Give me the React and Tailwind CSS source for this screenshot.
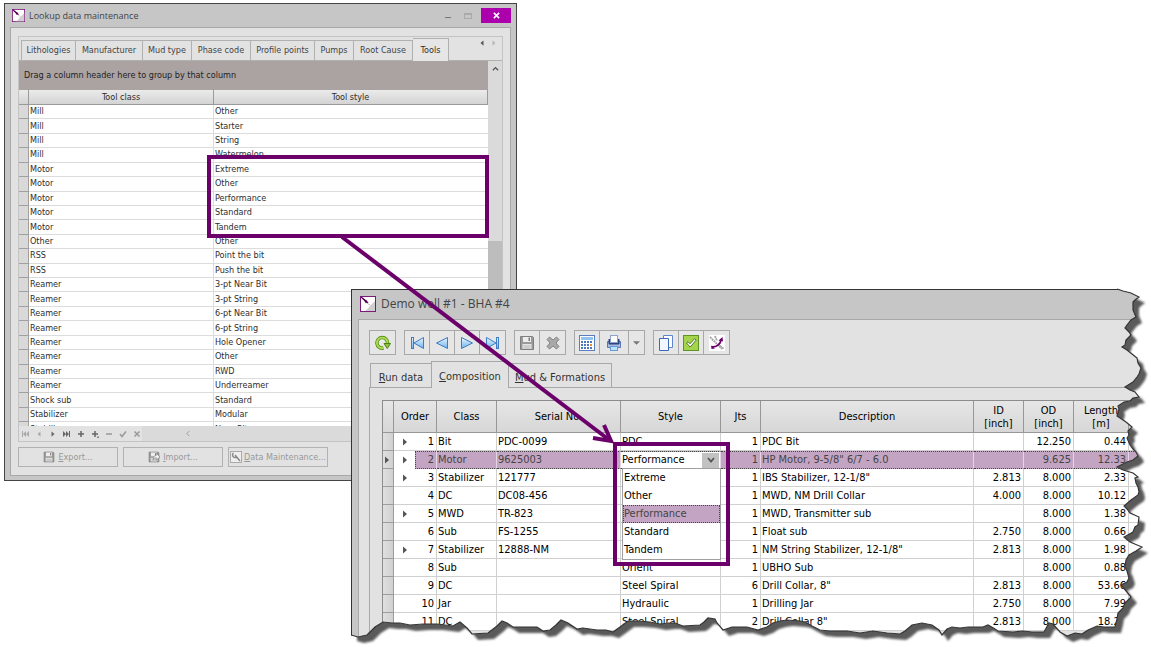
import React from "react";

const LOOKUP_TABS = ["Lithologies", "Manufacturer", "Mud type", "Phase code", "Profile points", "Pumps", "Root Cause", "Tools"];
const LOOKUP_TAB_WIDTHS = ["w-[55px]", "w-[67px]", "w-[49px]", "w-[59px]", "w-[64px]", "w-[39px]", "w-[59px]", "w-[36px]"];

const TOOLS = [
  ["Mill", "Other"],
  ["Mill", "Starter"],
  ["Mill", "String"],
  ["Mill", "Watermelon"],
  ["Motor", "Extreme"],
  ["Motor", "Other"],
  ["Motor", "Performance"],
  ["Motor", "Standard"],
  ["Motor", "Tandem"],
  ["Other", "Other"],
  ["RSS", "Point the bit"],
  ["RSS", "Push the bit"],
  ["Reamer", "3-pt Near Bit"],
  ["Reamer", "3-pt String"],
  ["Reamer", "6-pt Near Bit"],
  ["Reamer", "6-pt String"],
  ["Reamer", "Hole Opener"],
  ["Reamer", "Other"],
  ["Reamer", "RWD"],
  ["Reamer", "Underreamer"],
  ["Shock sub", "Standard"],
  ["Stabilizer", "Modular"],
  ["Stabilizer", "Near Bit"],
];

const BHA = [
  { n: 1, open: true, cls: "Bit", serial: "PDC-0099", style: "PDC", jts: 1, desc: "PDC Bit", id: "", od: "12.250", len: "0.44" },
  { n: 2, open: true, cls: "Motor", serial: "9625003", style: "Performance", jts: 1, desc: 'HP Motor, 9-5/8" 6/7 - 6.0', id: "", od: "9.625", len: "12.33", selected: true },
  { n: 3, open: true, cls: "Stabilizer", serial: "121777", style: "", jts: 1, desc: 'IBS Stabilizer, 12-1/8"', id: "2.813", od: "8.000", len: "2.33" },
  { n: 4, cls: "DC", serial: "DC08-456", style: "", jts: 1, desc: "MWD, NM Drill Collar", id: "4.000", od: "8.000", len: "10.12" },
  { n: 5, open: true, cls: "MWD", serial: "TR-823", style: "", jts: 1, desc: "MWD, Transmitter sub", id: "", od: "8.000", len: "1.38" },
  { n: 6, cls: "Sub", serial: "FS-1255", style: "", jts: 1, desc: "Float sub", id: "2.750", od: "8.000", len: "0.66" },
  { n: 7, open: true, cls: "Stabilizer", serial: "12888-NM", style: "", jts: 1, desc: 'NM String Stabilizer, 12-1/8"', id: "2.813", od: "8.000", len: "1.98" },
  { n: 8, cls: "Sub", serial: "", style: "Orient", jts: 1, desc: "UBHO Sub", id: "", od: "8.000", len: "0.88" },
  { n: 9, cls: "DC", serial: "", style: "Steel Spiral", jts: 6, desc: 'Drill Collar, 8"', id: "2.813", od: "8.000", len: "53.66" },
  { n: 10, cls: "Jar", serial: "", style: "Hydraulic", jts: 1, desc: "Drilling Jar", id: "2.750", od: "8.000", len: "7.99" },
  { n: 11, cls: "DC", serial: "", style: "Steel Spiral", jts: 2, desc: 'Drill Collar 8"', id: "2.813", od: "8.000", len: "18.29" },
];

const STYLES = ["Extreme", "Other", "Performance", "Standard", "Tandem"];

// Ragged right and bottom edge of the front window, from its top right corner to its bottom left.
const TORN_EDGE =
  "1117,289 1123,291 1131,293 1139,297 1135,300 1133,302 1133,310 1136,317 1131,320 1127,325 1125,328 1129,332 1131,335 1126,340 1125,345 1122,347 1127,350 1132,354 1137,358 1138,363 1141,368 1139,374 1137,377 1133,382 1125,387 1130,390 1135,392 1139,397 1133,398 1130,401 1124,402 1118,406 1119,409 1117,416 1123,420 1126,422 1132,427 1128,431 1129,435 1127,438 1130,445 1133,449 1136,452 1138,456 1133,460 1127,462 1117,467 1123,470 1133,473 1138,477 1135,478 1136,483 1138,487 1139,492 1138,495 1131,500 1124,506 1127,509 1130,513 1139,517 1138,525 1135,527 1133,532 1124,537 1130,542 1142,547 1136,551 1129,555 1126,560 1125,567 1127,571 1129,578 1127,582 1121,585 1131,597 1125,603 1123,608 1118,613 1117,619 1115,627 1104,627 1097,626 1088,630 1082,634 1075,633 1067,636 1060,632 1053,624 1049,623 1044,632 1032,632 1023,631 1013,632 998,631 995,629 988,625 983,627 977,627 968,627 960,628 952,627 947,629 942,635 939,630 932,625 922,623 912,625 905,631 900,634 887,633 873,631 860,633 847,631 830,631 820,630 812,626 805,622 800,621 787,620 780,621 773,623 767,627 758,630 747,627 737,627 732,627 723,630 717,623 715,619 708,618 704,622 700,625 683,626 675,623 669,623 660,624 650,622 638,621 628,621 620,627 613,632 606,630 597,630 583,628 577,629 568,623 561,620 556,625 550,630 543,631 537,627 523,627 513,627 507,623 502,621 497,626 488,633 472,634 467,628 460,622 453,626 437,624 423,624 410,625 400,623 392,623 383,622 375,627 367,635 358,637 351,635";
const TORN = "351,289 " + TORN_EDGE;

function Logo({ className }) {
  return (
    <svg viewBox="0 0 16 16" className={className} aria-hidden="true">
      <rect x="0.5" y="0.5" width="15" height="15" fill="#fff" stroke="#7b1a7b" />
      <path d="M15 5 L15 15 L5 15 Q8 13 9 11Z" fill="#cfcfcf" />
      <path d="M1 1 L8 7" stroke="#6b006b" strokeWidth="1.5" />
      <path d="M2.500 2 L7.500 5 L6 7.500Z" fill="#4a004a" />
      <path d="M8 7.500l2 2" stroke="#c9a" strokeWidth="1" />
    </svg>
  );
}

function Tri({ dir = "right", className = "h-2 w-2", bar }) {
  return (
    <svg viewBox="0 0 8 8" className={className} aria-hidden="true">
      <g transform={dir === "left" ? "matrix(-1 0 0 1 8 0)" : undefined} fill="currentColor">
        {bar ? <path d="M0 1l3 3-3 3zM3 1l3 3-3 3zM6 1h1v6H6z" /> : <path d="M2 0.500l4 3.500-4 3.500z" />}
      </g>
    </svg>
  );
}

function Floppy({ className, arrow }) {
  return (
    <svg viewBox="0 0 16 16" className={className} aria-hidden="true">
      <path d="M1.500 1.500h12l1 1v12h-13z" fill="#9a9a9a" stroke="#7e7e7e" />
      <path d="M4 2h8v5H4z" fill="#ededed" />
      <path d="M9.500 2.500h1.500v3.500H9.500z" fill="#7e7e7e" />
      <path d="M3.500 9h9v5h-9z" fill="#e4e4e4" />
      <path d="M4.500 11h7M4.500 13h7" stroke="#b4b4b4" />
      {arrow && <path d="M7 12c0-4 1-6 4-6V3l5 5-5 4V9c-2 0-3 1-4 3z" fill="#f2f2f2" stroke="#8a8a8a" />}
    </svg>
  );
}

const icon = "h-4 w-4";

function NavIcon({ back, bar }) {
  return (
    <svg viewBox="0 0 16 16" className={icon} aria-hidden="true">
      <defs>
        <linearGradient id="nav" x1="0" y1="0" x2="0" y2="1">
          <stop offset="0" stopColor="#eaf5ff" />
          <stop offset="1" stopColor="#6db4ee" />
        </linearGradient>
      </defs>
      <g transform={back ? "matrix(-1 0 0 1 16 0)" : undefined} fill="url(#nav)" stroke="#3d7cc4">
        <path d={bar ? "M1.500 2.500 L11 8 L1.500 13.500Z" : "M2.500 2.500 L13.500 8 L2.500 13.500Z"} strokeLinejoin="round" />
        {bar && <rect x="11.5" y="2.500" width="2" height="11" />}
      </g>
    </svg>
  );
}

function RefreshIcon() {
  return (
    <svg viewBox="0 0 16 16" className={icon} aria-hidden="true">
      <path d="M12.500 8.500 A5.300 5.300 0 1 0 8.500 13" fill="none" stroke="#5b9418" strokeWidth="3.600" />
      <path d="M12.500 8.500 A5.300 5.300 0 1 0 8.500 13" fill="none" stroke="#b4de5a" strokeWidth="1.800" />
      <path d="M9 8.500h6.500L12.300 13.500z" fill="#8cc63a" stroke="#4d8312" />
      <path d="M6 9.500A2.200 2.200 0 1 1 9 7.500" fill="none" stroke="#f4f4f4" />
    </svg>
  );
}

function DeleteIcon() {
  return (
    <svg viewBox="0 0 16 16" className={icon} aria-hidden="true">
      <path d="M2 4.500 4.500 2 8 5 11.500 2 14 4.500 11 8 14 11.500 11.500 14 8 11 4.500 14 2 11.500 5 8Z" fill="#a8a8a8" stroke="#868686" />
    </svg>
  );
}

function CalcIcon() {
  const dots = [];
  for (let r = 0; r < 3; r++) for (let c = 0; c < 4; c++) dots.push([2 + c * 3, 6 + r * 3]);
  return (
    <svg viewBox="0 0 16 16" className={icon} aria-hidden="true">
      <rect x="0.500" y="0.500" width="15" height="15" fill="#fff" stroke="#5b7fbd" />
      <rect x="2" y="2" width="12" height="3" fill="#8fc3f2" />
      {dots.map(([x, y]) => (
        <rect key={x + "-" + y} x={x} y={y} width="2" height="2" fill={x > 10 && y > 7 && y < 11 ? "#f08a24" : "#4a78c0"} />
      ))}
    </svg>
  );
}

function PrintIcon() {
  return (
    <svg viewBox="0 0 16 16" className={icon} aria-hidden="true">
      <path d="M1.500 6.500h13v6h-13z" fill="#a9bbe2" stroke="#5a74b4" />
      <path d="M3 4v5h10V4" fill="#2c4480" stroke="#2c4480" />
      <rect x="4.500" y="0.500" width="7" height="7" fill="#fff" stroke="#8ea2cc" />
      <rect x="4.500" y="11.500" width="7" height="4" fill="#b8e4fb" stroke="#6b9ad0" />
    </svg>
  );
}

function CopyIcon() {
  return (
    <svg viewBox="0 0 16 16" className={icon} aria-hidden="true">
      <path d="M5.500 0.500h9v12h-9z" fill="#fff" stroke="#5f86cc" />
      <path d="M1.500 3.500h9v12h-9z" fill="#f3f7ff" stroke="#3f69b8" />
    </svg>
  );
}

function CheckIcon() {
  return (
    <svg viewBox="0 0 16 16" className={icon} aria-hidden="true">
      <rect x="0.500" y="0.500" width="15" height="15" fill="#a4d44c" stroke="#5d9423" />
      <path d="M3.500 8 5 6.800l2 2 4.500-5 1.700 1.300L7.200 12z" fill="#fff" stroke="#3f6a16" strokeWidth="0.900" />
    </svg>
  );
}

function SurveyIcon() {
  return (
    <svg viewBox="0 0 16 16" className={icon} aria-hidden="true">
      <rect width="16" height="16" fill="#fff" />
      <path d="M1 2 L13 14 M6 1 L8 6 M9 9 L15 14" stroke="#a0a0a0" strokeWidth="1.800" strokeDasharray="2 0.600" />
      <path d="M3 12 C8 12 12 9 12 4" fill="none" stroke="#6b006b" strokeWidth="1.800" />
      <path d="M9.500 5.500l4-3.500.5 4.500zM2 10.500l4 3-3.500.5z" fill="#6b006b" />
    </svg>
  );
}

function LookupWindow() {
  return (
    <section
      aria-label="Lookup data maintenance"
      className="absolute left-1 top-[3px] flex h-[478px] w-[513px] flex-col border border-[#444] bg-[#c6c6c6] px-[5px] pb-1 font-['DejaVu_Sans_Condensed','DejaVu_Sans',sans-serif] text-[9px] leading-[11px] text-[#2e2e2e]"
    >
      <header className="flex h-[23px] shrink-0 items-center">
        <Logo className="ml-[2px] h-[13px] w-[13px]" />
        <h1 className="ml-1 grow font-['Open_Sans','Noto_Sans',sans-serif] text-[9px] leading-4 text-[#444]">Lookup data maintenance</h1>
        <button aria-label="Minimize" className="flex h-4 w-5 items-center justify-center">
          <span className="mt-1 h-px w-[6px] bg-[#777]" />
        </button>
        <button aria-label="Maximize" className="flex h-4 w-5 items-center justify-center">
          <span className="h-[6px] w-2 border border-t-2 border-[#aaa]" />
        </button>
        <button aria-label="Close" className="ml-[3px] flex h-[15px] w-[30px] items-center justify-center bg-[#ad00ad]">
          <svg viewBox="0 0 8 8" className="h-[7px] w-[7px]">
            <path d="M1 1l6 6M7 1L1 7" stroke="#fff" strokeWidth="1.800" />
          </svg>
        </button>
      </header>

      <div className="flex min-h-0 grow flex-col border border-[#a8a8a8] bg-[#e2e2e2] px-[7px] pt-2">
        <div className="flex h-[406px] flex-col border border-[#c4c4c4] pt-px">
          <div role="tablist" className="flex h-[23px] shrink-0 items-end border-b border-[#b0b0b0] pl-[2px]">
            {LOOKUP_TABS.map((t, i) => (
              <button
                key={t}
                role="tab"
                aria-selected={i === 7}
                className={
                  LOOKUP_TAB_WIDTHS[i] +
                  " whitespace-nowrap border-t border-r text-center first:border-l border-[#b0b0b0] " +
                  (i === 7 ? "-mb-px h-[23px] bg-[#e6e6e6]" : "h-5 text-[#444]")
                }
              >
                {t}
              </button>
            ))}
            <div className="ml-auto mr-1 flex gap-1 self-center pb-3">
              <button aria-label="Scroll tabs left" className="text-[#555]"><Tri dir="left" className="h-[6px] w-2" /></button>
              <button aria-label="Scroll tabs right" className="text-[#b5b5b5]"><Tri className="h-[6px] w-2" /></button>
            </div>
          </div>

          <div className="flex min-h-0 grow">
            <div className="flex min-w-0 grow flex-col">
              <p className="flex h-[29px] shrink-0 items-center bg-[#aba2a2] pl-[5px] text-[#222]">Drag a column header here to group by that column</p>
              <div className="min-h-0 grow overflow-hidden">
                <table className="h-[347px] w-full table-fixed border-separate border-spacing-0 bg-white">
                  <colgroup>
                    <col className="w-[10px]" />
                    <col className="w-[185px]" />
                    <col />
                  </colgroup>
                  <thead>
                    <tr className="h-[15px] bg-linear-to-b from-[#ebebeb] to-[#d2d2d2]">
                      <th className="border-b border-r border-[#9a9a9a] p-0" />
                      <th className="border-b border-r border-[#9a9a9a] p-0 font-normal">Tool class</th>
                      <th className="border-b border-r border-[#9a9a9a] p-0 font-normal">Tool style</th>
                    </tr>
                  </thead>
                  <tbody>
                    {TOOLS.map(([c, s], i) => (
                      <tr key={i}>
                        <td className="border-b border-r border-[#a0a0a0] bg-[#d9d9d9] p-0" />
                        <td className="border-b border-r border-[#dcdcdc] p-0 pl-px">{c}</td>
                        <td className="border-b border-[#dcdcdc] p-0 pl-px">{s}</td>
                      </tr>
                    ))}
                  </tbody>
                </table>
              </div>
            </div>
            <div className="flex w-[14px] shrink-0 flex-col items-center bg-[#dadada]">
              <svg viewBox="0 0 8 8" className="mt-1 h-[7px] w-[7px]">
                <path d="M1 6l3-3 3 3" fill="none" stroke="#555" strokeWidth="1.500" />
              </svg>
              <div className="mt-[169px] w-full grow bg-[#bdbdbd]" />
            </div>
          </div>

          <div className="flex h-[15px] shrink-0 items-center bg-[#dadada] text-[#777]">
            <div className="flex h-full w-[123px] items-center gap-[6px] bg-[#e2e2e2] pl-[2px]">
              <button aria-label="First" className="text-[#aaa]"><Tri dir="left" bar /></button>
              <button aria-label="Previous" className="text-[#aaa]"><Tri dir="left" className="h-[6px] w-2" /></button>
              <button aria-label="Next" className="text-[#666]"><Tri className="h-[6px] w-2" /></button>
              <button aria-label="Last" className="text-[#666]"><Tri bar /></button>
              {[
                ["Add", "M4 1v6M1 4h6", "#666"],
                ["Add copy", "M4 1v6M1 4h6M7 6.500v1.500", "#666"],
                ["Remove", "M1 4h6", "#999"],
                ["Apply", "M1 4l2 2.500L7 1.500", "#999"],
                ["Cancel", "M1.500 1.500l5 5M6.500 1.500l-5 5", "#999"],
              ].map(([label, d, c]) => (
                <button key={label} aria-label={label}>
                  <svg viewBox="0 0 8 8" className="h-2 w-2">
                    <path d={d} stroke={c} strokeWidth="1.500" fill="none" />
                  </svg>
                </button>
              ))}
            </div>
            <svg viewBox="0 0 8 8" className="ml-[43px] h-[7px] w-[7px]">
              <path d="M5 1L2 4l3 3" fill="none" stroke="#999" />
            </svg>
          </div>
        </div>

        <div className="mt-[5px] flex gap-[5px] text-[#999]">
          <button disabled className="flex h-5 w-[100px] items-center justify-center gap-[3px] border border-[#b2b2b2]">
            <Floppy className="h-3 w-3" />
            <span><u>E</u>xport...</span>
          </button>
          <button disabled className="flex h-5 w-[100px] items-center justify-center gap-[3px] border border-[#b2b2b2]">
            <Floppy className="h-3 w-3" arrow />
            <span><u>I</u>mport...</span>
          </button>
          <button disabled className="flex h-5 w-[100px] items-center justify-center gap-[2px] whitespace-nowrap border border-[#b2b2b2]">
            <svg viewBox="0 0 12 12" className="h-3 w-3 shrink-0">
              <rect x="0.500" y="0.500" width="11" height="11" fill="#eee" stroke="#aaa" />
              <path d="M3.500 2a2.500 2.500 0 1 0 3.500 3.500M5 4L10 10" fill="none" stroke="#888" strokeWidth="1.500" />
            </svg>
            <span><u>D</u>ata Maintenance...</span>
          </button>
        </div>
      </div>
    </section>
  );
}

const group = "flex h-[25px] divide-x divide-[#a8a8a8] border border-[#a8a8a8] bg-[#e6e6e6]";
const tool = "flex w-[25px] items-center justify-center";
const hcell = "border-b border-r border-[#979797] p-0 text-center font-normal leading-[13px]";

function StyleEditor() {
  return (
    <div className="relative h-4 bg-white text-black">
      <div className="flex h-4 items-center">
        <input aria-label="Style" defaultValue="Performance" className="w-20 min-w-0 grow bg-white pl-px outline-none" />
        <button aria-label="Show styles" className="mr-px flex h-[15px] w-[17px] items-center justify-center bg-[#c2c2c2]">
          <svg viewBox="0 0 8 8" className="h-2 w-2">
            <path d="M1 2l3 3.500L7 2" fill="none" stroke="#555" strokeWidth="1.800" />
          </svg>
        </button>
      </div>
      <ul role="listbox" aria-label="Styles" className="absolute left-px top-4 z-10 w-[99px] border border-[#a0a0a0] bg-white">
        {STYLES.map((s) => (
          <li
            key={s}
            role="option"
            aria-selected={s === "Performance"}
            className={
              "flex h-[18px] items-center border " +
              (s === "Performance" ? "border-dotted border-[#444] bg-[#c3a5c3] text-[#444]" : "border-transparent")
            }
          >
            {s}
          </li>
        ))}
      </ul>
    </div>
  );
}

function BhaTable() {
  return (
    <table className="w-full table-fixed border-separate border-spacing-0 bg-white">
      <colgroup>
        <col className="w-[11px]" />
        <col className="w-[43px]" />
        <col className="w-[60px]" />
        <col className="w-[124px]" />
        <col className="w-[100px]" />
        <col className="w-[40px]" />
        <col className="w-[213px]" />
        <col className="w-[50px]" />
        <col className="w-[50px]" />
        <col className="w-[55px]" />
        <col />
      </colgroup>
      <thead>
        <tr className="h-8 bg-linear-to-b from-[#e6e6e6] to-[#d6d6d6]">
          <th className={hcell} />
          <th className={hcell}>Order</th>
          <th className={hcell}>Class</th>
          <th className={hcell}>Serial No.</th>
          <th className={hcell}>Style</th>
          <th className={hcell}>Jts</th>
          <th className={hcell}>Description</th>
          <th className={hcell}>ID<br />[inch]</th>
          <th className={hcell}>OD<br />[inch]</th>
          <th className={hcell}>Length<br />[m]</th>
          <th className={hcell} />
        </tr>
      </thead>
      <tbody>
        {BHA.map((r) => {
          const base = r.selected
            ? "h-[18px] border-y border-r border-y-[#444] border-r-[#e4d6e4] [border-top-style:dotted] [border-bottom-style:dotted] bg-[#c3a5c3] text-[#444] py-0 "
            : "h-[18px] border-b border-r border-[#d0d0d0] py-0 ";
          const text = base + "whitespace-nowrap pr-0 text-left ";
          const num = base + "pl-0 pr-[2px] text-right";
          return (
            <tr key={r.n}>
              <td className="border-b border-r border-[#9d9d9d] bg-linear-to-r from-[#e0e0e0] to-[#d0d0d0] p-0 text-[#555]">
                {r.selected && <Tri />}
              </td>
              <td className={r.selected ? "h-[18px] border-r border-r-[#e4d6e4] p-0" : base + "px-0"}>
                <div className="flex h-full items-center">
                  <span className="flex h-full w-[21px] shrink-0 items-center justify-center text-[#555]">{r.open && <Tri />}</span>
                  <span
                    className={
                      "flex h-full grow items-center justify-end pr-[2px] " +
                      (r.selected ? "h-[18px] border-y border-l border-dotted border-[#444] bg-[#c3a5c3] text-[#444]" : "")
                    }
                  >
                    {r.n}
                  </span>
                </div>
              </td>
              <td className={text + "pl-px"}>{r.cls}</td>
              <td className={text + "pl-px"}>{r.serial}</td>
              <td className={text + (r.selected ? "pl-0" : "pl-px")}>{r.selected ? <StyleEditor /> : r.style}</td>
              <td className={num}>{r.jts}</td>
              <td className={text + "pl-px"}>{r.desc}</td>
              <td className={num}>{r.id}</td>
              <td className={num}>{r.od}</td>
              <td className={num}>{r.len}</td>
              <td className={base} />
            </tr>
          );
        })}
      </tbody>
    </table>
  );
}

function BhaWindow() {
  return (
    <section
      aria-label="Demo well #1 - BHA #4"
      className="absolute left-[351px] top-[289px] flex h-[352px] w-[796px] flex-col border border-[#333] bg-[#c6c6c6] pl-[6px] font-['DejaVu_Sans_Condensed','DejaVu_Sans',sans-serif] text-[11px] leading-[14px] text-black"
    >
      <header className="flex h-[29px] shrink-0 items-center pb-[2px]">
        <Logo className="ml-[2px] h-4 w-4" />
        <h2 className="ml-[5px] font-['Open_Sans','Noto_Sans',sans-serif] text-[12px] leading-4 text-[#444]">Demo well #1 - BHA #4</h2>
      </header>
      <div className="flex grow flex-col border-l border-t border-[#a8a8a8] bg-[#e2e2e2] pl-[10px] pt-[10px]">
        <div role="toolbar" aria-label="Record actions" className="flex gap-2">
          <div className={group}>
            <button aria-label="Refresh" className={tool}><RefreshIcon /></button>
          </div>
          <div className={group}>
            <button aria-label="First record" className={tool}><NavIcon back bar /></button>
            <button aria-label="Previous record" className={tool}><NavIcon back /></button>
            <button aria-label="Next record" className={tool}><NavIcon /></button>
            <button aria-label="Last record" className={tool}><NavIcon bar /></button>
          </div>
          <div className={group}>
            <button aria-label="Save" className={tool}><Floppy className={icon} /></button>
            <button aria-label="Delete" className={tool}><DeleteIcon /></button>
          </div>
          <div className={group}>
            <button aria-label="Calculate" className={tool}><CalcIcon /></button>
            <button aria-label="Print" className="flex w-[29px] items-center justify-center"><PrintIcon /></button>
            <button aria-label="Print options" className="flex w-[15px] items-center justify-center">
              <svg viewBox="0 0 8 4" className="h-1 w-[7px]"><path d="M0 0h8L4 4z" fill="#777" /></svg>
            </button>
          </div>
          <div className={group}>
            <button aria-label="Copy" className={tool}><CopyIcon /></button>
            <button aria-label="Approve" className={tool}><CheckIcon /></button>
            <button aria-label="Survey" className={tool}><SurveyIcon /></button>
          </div>
        </div>

        <div role="tablist" className="mt-[6px] flex h-[26px] shrink-0 items-end pl-px text-[#333]">
          <button role="tab" aria-selected="false" className="h-6 w-[61px] border-l border-t border-[#a8a8a8] pt-1"><u>R</u>un data</button>
          <button role="tab" aria-selected="true" className="z-10 -mb-px h-[27px] w-[78px] border-x border-t border-[#a8a8a8] bg-[#e2e2e2] pt-[3px]"><u>C</u>omposition</button>
          <button role="tab" aria-selected="false" className="h-6 w-[103px] border-r border-t border-[#a8a8a8] pt-1"><u>M</u>ud &amp; Formations</button>
        </div>
        <div className="grow border-l border-t border-[#a8a8a8] pl-3 pt-3">
          <div className="border-l border-t border-[#8c8c8c]">
            <BhaTable />
          </div>
        </div>
      </div>
    </section>
  );
}

export default function App() {
  return (
    <main className="relative min-h-screen w-full overflow-hidden bg-white">
      <LookupWindow />

      <svg className="pointer-events-none absolute left-0 top-0 h-[647px] w-[1151px]" aria-hidden="true">
        <defs>
          <clipPath id="torn" clipPathUnits="userSpaceOnUse">
            <polygon points={TORN} />
          </clipPath>
          <filter id="soft">
            <feGaussianBlur stdDeviation="1.200" />
          </filter>
        </defs>
        <polygon points={TORN} transform="translate(6 6)" fill="#5a5a5a" filter="url(#soft)" />
      </svg>

      <div className="absolute inset-0 [clip-path:url(#torn)]">
        <BhaWindow />
      </div>

      <svg className="pointer-events-none absolute left-0 top-0 h-[647px] w-[1151px]" aria-hidden="true">
        <polyline points={TORN_EDGE} fill="none" stroke="#333" strokeWidth="1.200" />
        <g fill="none" stroke="#6b006b" strokeWidth="4">
          <rect x="209" y="157" width="278" height="79" />
          <rect x="615" y="444" width="113" height="120" />
          <path d="M342 237 L608 439" />
          <path d="M604 425 L611 441 L593 438" strokeLinejoin="miter" />
        </g>
      </svg>
    </main>
  );
}
